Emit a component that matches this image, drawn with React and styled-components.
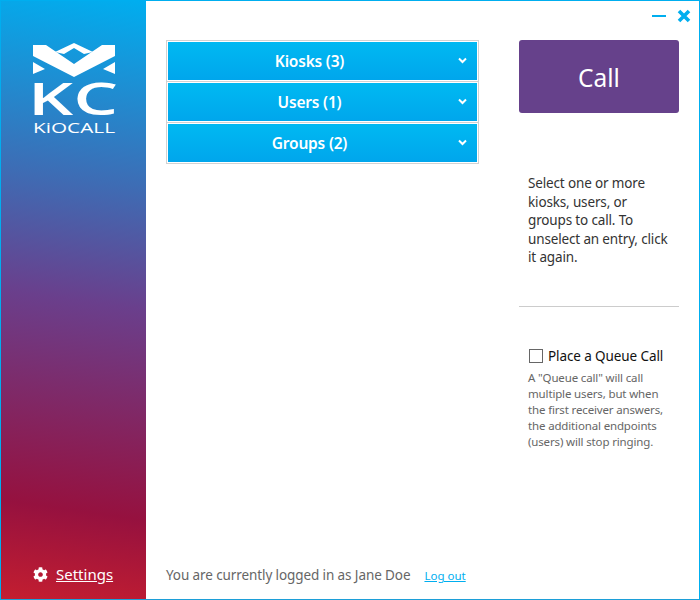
import styled, { createGlobalStyle } from "styled-components";
import { FaCog } from "react-icons/fa";

const GlobalStyle = createGlobalStyle`
  html, body {
    margin: 0;
    padding: 0;
    background: #fff;
  }
  * {
    box-sizing: border-box;
  }
`;

const groups = ["Kiosks (3)", "Users (1)", "Groups (2)"];

const Logo = () => (
  <LogoSvg width="82" height="92" viewBox="0 0 82 92">
    <path fill="#fff" d="M0 2h13l28 19L69 2h13v11L41 34 0 13z" />
    <path fill="#fff" d="M22 9L41 0l19 9-9 2-10-6-10 6z" />
    <path fill="#fff" d="M0 19l12 7-12 5zM82 19l-12 7 12 5z" />
    <text x="-5" y="72" fontFamily="'Open Sans', sans-serif" fontWeight="600" fontSize="45" textLength="90" lengthAdjust="spacingAndGlyphs" fill="#fff">KC</text>
    <text x="0" y="90" fontFamily="'Open Sans', sans-serif" fontWeight="400" fontSize="14" textLength="82" lengthAdjust="spacingAndGlyphs" fill="#fff">KiOCALL</text>
  </LogoSvg>
);

const Chevron = () => (
  <svg width="9" height="7" viewBox="0 0 9 7">
    <path d="M1 1.5l3.5 3.5L8 1.5" fill="none" stroke="#fff" strokeWidth="2" />
  </svg>
);

const App = () => {
  return (
    <Window>
      <GlobalStyle />
      <Sidebar>
        <Logo />
        <SettingsLink>
          <FaCog size={15} color="#fff" />
          <SettingsText>Settings</SettingsText>
        </SettingsLink>
      </Sidebar>
      <Main>
        <TitleBar>
          <svg width="14" height="4" viewBox="0 0 14 4">
            <rect width="14" height="2" y="1" fill="#00aeef" />
          </svg>
          <svg width="14" height="14" viewBox="0 0 14 14">
            <path d="M2 2l10 10M12 2L2 12" stroke="#00aeef" strokeWidth="3.6" fill="none" />
          </svg>
        </TitleBar>
        <Columns>
          <LeftColumn>
            <Accordion>
              {groups.map((group) => (
                <AccordionRow key={group}>
                  <AccordionHeader>
                    {group}
                    <ChevronSlot>
                      <Chevron />
                    </ChevronSlot>
                  </AccordionHeader>
                </AccordionRow>
              ))}
            </Accordion>
            <Footer>
              <LoggedIn>You are currently logged in as Jane Doe</LoggedIn>
              <LogOut>Log out</LogOut>
            </Footer>
          </LeftColumn>
          <RightColumn>
            <CallButton>Call</CallButton>
            <Instructions>
              Select one or more
              <br />
              kiosks, users, or
              <br />
              groups to call. To
              <br />
              unselect an entry, click
              <br />
              it again.
            </Instructions>
            <Divider />
            <QueueBlock>
              <QueueLabel>
                <CheckBox />
                Place a Queue Call
              </QueueLabel>
              <QueueNote>
                A "Queue call" will call multiple users, but when the first
                receiver answers, the additional endpoints (users) will stop
                ringing.
              </QueueNote>
            </QueueBlock>
          </RightColumn>
        </Columns>
      </Main>
    </Window>
  );
};

export default App;

const Window = styled.div`
  display: flex;
  width: 700px;
  height: 600px;
  border: 1px solid #00aeef;
  border-bottom-color: #1c9fd8;
  font-family: "Noto Sans", "Open Sans", sans-serif;
  overflow: hidden;
`;

const Sidebar = styled.aside`
  display: flex;
  flex-direction: column;
  align-items: flex-start;
  justify-content: space-between;
  width: 145px;
  flex-shrink: 0;
  padding: 42px 0 15px 32px;
  background: linear-gradient(
    188deg,
    #00aeef 0%,
    #3d6db5 30%,
    #6a3f8c 50%,
    #96113f 84%,
    #c41e30 100%
  );
`;

const LogoSvg = styled.svg`
  display: block;
  overflow: visible;
`;

const SettingsLink = styled.a`
  display: flex;
  align-items: center;
  gap: 8px;
  color: #fff;
  font-size: 15px;
  cursor: pointer;
`;

const SettingsText = styled.span`
  text-decoration: underline;
`;

const Main = styled.main`
  display: flex;
  flex-direction: column;
  flex: 1;
  min-width: 0;
`;

const TitleBar = styled.div`
  display: flex;
  justify-content: flex-end;
  align-items: center;
  gap: 11px;
  height: 39px;
  padding: 0 8px 9px 0;
`;

const Columns = styled.div`
  display: flex;
  flex: 1;
  min-height: 0;
  padding-left: 20px;
`;

const LeftColumn = styled.div`
  display: flex;
  flex-direction: column;
  justify-content: space-between;
  width: 313px;
  padding-bottom: 15px;
`;

const Accordion = styled.div`
  border: 1px solid #d2d2d2;
  border-top: none;
`;

const AccordionRow = styled.div`
  padding: 1px;
  border-top: 1px solid #d2d2d2;
`;

const AccordionHeader = styled.button`
  display: block;
  position: relative;
  width: 100%;
  height: 38px;
  border: none;
  padding: 0 26px 0 0;
  color: #fff;
  font-family: inherit;
  font-size: 15.5px;
  font-weight: 600;
  letter-spacing: -0.2px;
  background: linear-gradient(180deg, #00b9f2 0%, #00a6ec 100%);
`;

const ChevronSlot = styled.span`
  position: absolute;
  top: 15px;
  right: 10px;
  line-height: 0;
`;

const Footer = styled.div`
  display: flex;
  align-items: baseline;
  gap: 14px;
`;

const LoggedIn = styled.span`
  color: #666;
  font-size: 13.5px;
  letter-spacing: -0.1px;
`;

const LogOut = styled.a`
  color: #00aeef;
  font-size: 11.5px;
  text-decoration: underline;
  cursor: pointer;
`;

const RightColumn = styled.div`
  display: flex;
  flex-direction: column;
  width: 160px;
  margin-left: 40px;
`;

const CallButton = styled.button`
  width: 160px;
  height: 73px;
  border: none;
  border-radius: 3px;
  padding: 2px 0 0;
  color: #fff;
  background: #66418b;
  font-family: inherit;
  font-size: 24.5px;
`;

const Instructions = styled.p`
  margin: 61px 0 0;
  padding: 0 9px;
  color: #333;
  font-size: 13.5px;
  letter-spacing: -0.15px;
  line-height: 18.5px;
  white-space: nowrap;
`;

const Divider = styled.hr`
  width: 100%;
  margin: 39px 0 0;
  border: none;
  border-top: 1px solid #ccc;
`;

const QueueBlock = styled.div`
  margin-top: 40px;
  padding-left: 9px;
`;

const QueueLabel = styled.label`
  display: flex;
  align-items: center;
  gap: 5px;
  color: #111;
  font-size: 13.5px;
  letter-spacing: -0.1px;
`;

const CheckBox = styled.span`
  width: 14px;
  height: 14px;
  margin-left: 1px;
  border: 1px solid #666;
`;

const QueueNote = styled.p`
  max-width: 138px;
  margin: 5px 0 0;
  color: #666;
  font-size: 11.5px;
  letter-spacing: -0.15px;
  line-height: 16px;
`;
